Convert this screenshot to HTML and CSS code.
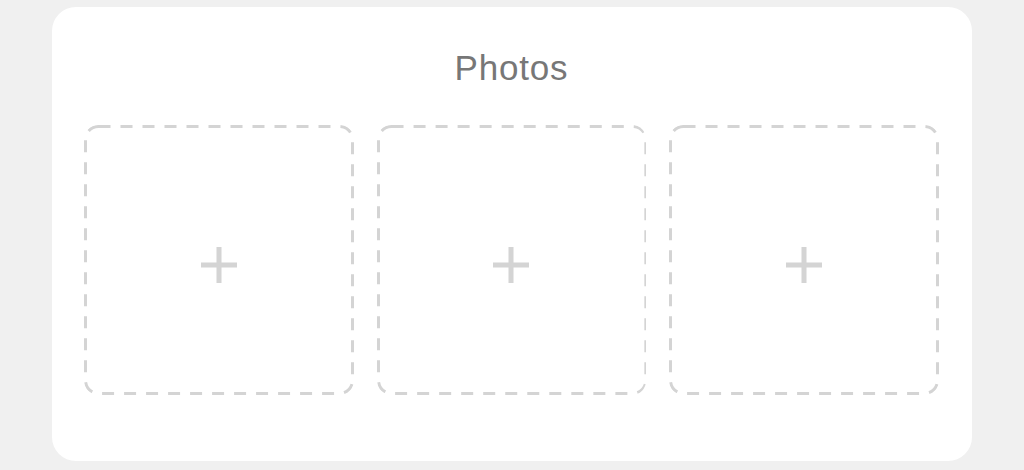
FILE: index.html
```html
<!DOCTYPE html>
<html>
<head>
<title>Photos</title>
<link rel="stylesheet" href="styles.css">
</head>
<body>

<div class="card">
  <h2 class="card-title">Photos</h2>

  <div class="photo-grid">
    <div class="photo-slot">
      <svg class="plus" width="40" height="40" viewBox="0 0 40 40"><path d="M20 2v36M2 20h36" /></svg>
    </div>
    <div class="photo-slot">
      <svg class="plus" width="40" height="40" viewBox="0 0 40 40"><path d="M20 2v36M2 20h36" /></svg>
    </div>
    <div class="photo-slot">
      <svg class="plus" width="40" height="40" viewBox="0 0 40 40"><path d="M20 2v36M2 20h36" /></svg>
    </div>
  </div>
</div>

</body>
</html>
```

FILE: styles.css
```css
body {
    font-family: "Liberation Sans", Arial, sans-serif;
    background-color: #f0f0f0;
    margin: 0;
    padding: 7px 0 0;
}

.card {
    width: 920px;
    height: 454px;
    box-sizing: border-box;
    margin: 0 auto;
    background-color: #fff;
    border-radius: 24px;
    padding: 0 33px 0 32px;
}

.card-title {
    margin: 0;
    padding-top: 40px;
    height: 118px;
    box-sizing: border-box;
    text-align: center;
    font-size: 35px;
    font-weight: normal;
    letter-spacing: 0.8px;
    line-height: 42px;
    color: #777;
}

.photo-grid {
    display: grid;
    grid-template-columns: repeat(3, 1fr);
    gap: 23px;
}

/* dashed outline drawn as svg so the dash length can be set */
.photo-slot {
    height: 270px;
    border-radius: 14px;
    background: url("data:image/svg+xml,%3Csvg xmlns='http://www.w3.org/2000/svg' width='270' height='270'%3E%3Crect x='1.5' y='1.5' width='267' height='267' rx='13' fill='none' stroke='%23d4d4d4' stroke-width='3' stroke-dasharray='12 10'/%3E%3C/svg%3E") no-repeat;
    background-size: 100% 100%;
    display: flex;
    align-items: center;
    justify-content: center;
}

.plus {
    margin-top: 10px;
}

.plus path {
    stroke: #d4d4d4;
    stroke-width: 5;
    fill: none;
}
```
